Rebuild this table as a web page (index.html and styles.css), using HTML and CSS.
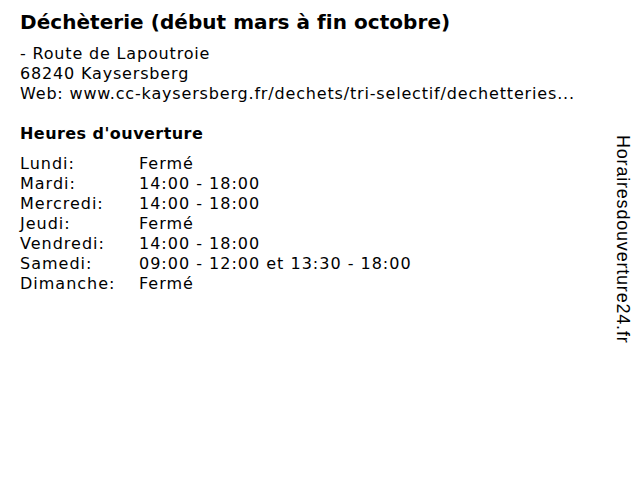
FILE: index.html
```html
<!DOCTYPE html>
<html lang="fr">
<head>
<meta charset="utf-8">
<link rel="stylesheet" href="styles.css">
</head>
<body>
<div class="page">
  <h1 class="title">Déchèterie (début mars à fin octobre)</h1>
  <div class="address">
    <div>- Route de Lapoutroie</div>
    <div>68240 Kaysersberg</div>
    <div>Web: www.cc-kaysersberg.fr/dechets/tri-selectif/dechetteries...</div>
  </div>
  <h2 class="subtitle">Heures d'ouverture</h2>
  <div class="hours">
    <span>Lundi:</span><span>Fermé</span>
    <span>Mardi:</span><span>14:00 - 18:00</span>
    <span>Mercredi:</span><span>14:00 - 18:00</span>
    <span>Jeudi:</span><span>Fermé</span>
    <span>Vendredi:</span><span>14:00 - 18:00</span>
    <span>Samedi:</span><span>09:00 - 12:00 et 13:30 - 18:00</span>
    <span>Dimanche:</span><span>Fermé</span>
  </div>
</div>
<div class="brand">Horairesdouverture24.fr</div>
</body>
</html>
```
FILE: styles.css
```css
html, body {
  margin: 0;
  padding: 0;
  background: #fff;
}
body {
  width: 640px;
  height: 480px;
  position: relative;
  overflow: hidden;
  font-family: "DejaVu Sans", sans-serif;
  color: #000;
}
.page {
  padding: 10px 0 0 20px;
  display: flex;
  flex-direction: column;
}
.title {
  margin: 0;
  font-size: 20px;
  font-weight: bold;
  line-height: 24px;
  letter-spacing: 0.05px;
}
.address {
  margin-top: 10px;
  font-size: 16px;
  line-height: 20px;
  letter-spacing: 0.83px;
}
.subtitle {
  margin: 20px 0 0 0;
  font-size: 16px;
  font-weight: bold;
  line-height: 20px;
  letter-spacing: 0.45px;
}
.hours {
  margin-top: 10px;
  display: grid;
  grid-template-columns: 119px auto;
  font-size: 16px;
  line-height: 20px;
  letter-spacing: 1px;
}
.brand {
  position: absolute;
  top: 135px;
  left: 612px;
  writing-mode: vertical-rl;
  font-family: "Liberation Sans", Arial, sans-serif;
  font-size: 18px;
  line-height: 22px;
  letter-spacing: 0.8px;
  color: #000;
}
```
